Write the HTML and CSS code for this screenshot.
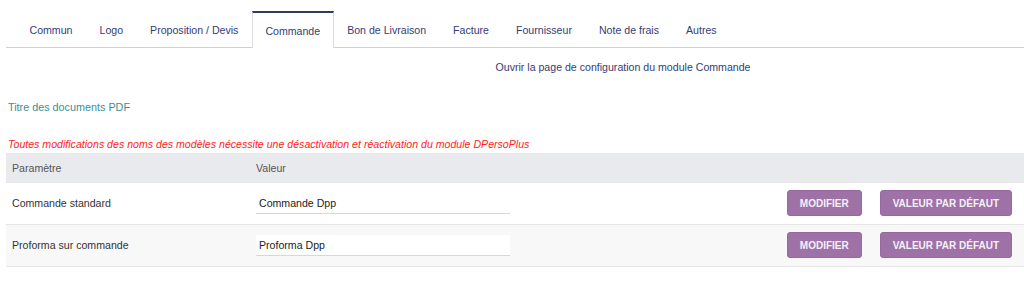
FILE: index.html
```html
<!DOCTYPE html>
<html lang="fr">
<head>
    <meta charset="UTF-8">
    <meta name="viewport" content="width=device-width, initial-scale=1.0">
    <title>DPersoPlus - Configuration</title>

    <link rel="stylesheet" href="styles.css">
</head>
<body>
    <div class="page">
        <div class="tabs">
            <a class="tab">Commun</a>
            <a class="tab">Logo</a>
            <a class="tab">Proposition / Devis</a>
            <a class="tab tab-active">Commande</a>
            <a class="tab">Bon de Livraison</a>
            <a class="tab">Facture</a>
            <a class="tab">Fournisseur</a>
            <a class="tab">Note de frais</a>
            <a class="tab">Autres</a>
        </div>

        <div class="config-link">
            <a href="#">Ouvrir la page de configuration du module Commande</a>
        </div>

        <div class="titre">Titre des documents PDF</div>

        <div class="warning">Toutes modifications des noms des modèles nécessite une désactivation et réactivation du module DPersoPlus</div>

        <table class="liste">
            <tr class="liste-titre">
                <td class="col-param">Paramètre</td>
                <td class="col-valeur">Valeur</td>
                <td></td>
            </tr>
            <tr class="ligne">
                <td>Commande standard</td>
                <td><input type="text" class="champ" value="Commande Dpp"></td>
                <td class="actions">
                    <button class="btn">Modifier</button>
                    <button class="btn">Valeur par défaut</button>
                </td>
            </tr>
            <tr class="ligne ligne-paire">
                <td>Proforma sur commande</td>
                <td><input type="text" class="champ champ-blanc" value="Proforma Dpp"></td>
                <td class="actions">
                    <button class="btn">Modifier</button>
                    <button class="btn">Valeur par défaut</button>
                </td>
            </tr>
        </table>
    </div>
</body>
</html>
```

FILE: styles.css
```css
body {
    margin: 0;
    font-family: "Liberation Sans", Arial, sans-serif;
    font-size: 10.6px;
    color: #333;
    background-color: #fff;
}

.page {
    padding: 11px 0 0 6px;
}

.tabs {
    display: flex;
    padding-left: 10px;
    border-bottom: 1px solid #d0d0d0;
    height: 36px;
}

.tab {
    display: flex;
    align-items: center;
    padding: 2px 13.5px 0;
    color: #343c74;
    cursor: pointer;
}

.tab-active {
    border: 1px solid #dcdcdc;
    border-top: 2px solid #2c3e5a;
    border-bottom: none;
    padding: 1px 12.5px 0;
    background-color: #fff;
    margin-bottom: -1px;
}

.config-link {
    text-align: center;
    padding-left: 216px;
    margin-top: 13px;
    height: 14px;
}

.config-link a {
    color: #343c74;
    text-decoration: none;
}

.titre {
    margin: 26px 0 0 2px;
    font-size: 10.8px;
    color: #3e8d96;
}

.warning {
    margin: 25px 0 0 2px;
    color: #f22;
    font-style: italic;
}

.liste {
    width: 100%;
    border-collapse: collapse;
    margin-top: 3px;
}

.liste td {
    padding: 0 6px;
    vertical-align: middle;
}

.liste-titre {
    background-color: #e9eaed;
    color: #555;
    height: 29px;
}

.liste-titre td {
    padding-top: 2px;
}

.col-param {
    width: 238px;
}

.col-valeur {
    width: 260px;
    padding-left: 0 !important;
}

.ligne {
    height: 42px;
    border-top: 1px solid #e6e6e6;
    border-bottom: 1px solid #e6e6e6;
}

.ligne td:nth-child(2) {
    padding-left: 0;
}

.ligne-paire {
    background-color: #f8f8f8;
}

.champ {
    width: 254px;
    box-sizing: border-box;
    height: 21px;
    padding: 0 3px;
    border: none;
    border-bottom: 1px solid #d8d8d8;
    background: transparent;
    font-family: inherit;
    font-size: 10.6px;
    color: #222;
    outline: none;
}

.champ-blanc {
    background-color: #fff;
}

.actions {
    text-align: right;
    padding-right: 12px !important;
    white-space: nowrap;
}

.btn {
    background-color: #9e72a7;
    color: #f6f0f7;
    border: 1px solid #9669a0;
    border-radius: 3px;
    height: 26px;
    padding: 0 12px;
    margin-left: 15px;
    font-family: inherit;
    font-size: 10px;
    font-weight: bold;
    text-transform: uppercase;
    cursor: pointer;
}

.btn:hover {
    background-color: #8c5f96;
}
```
